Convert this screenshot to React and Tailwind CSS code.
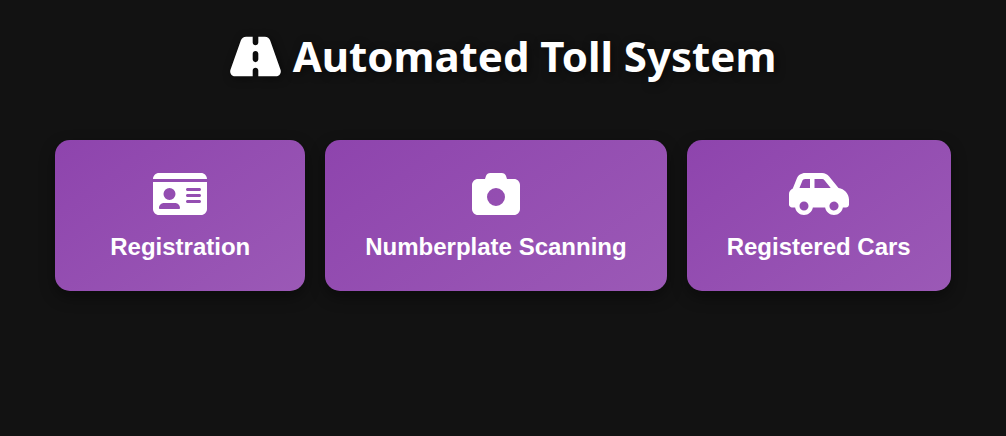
import { FaRoad, FaIdCard, FaCamera, FaCarSide } from "react-icons/fa6";

const actions = [
  { label: "Registration", Icon: FaIdCard, iconWidth: "w-[54px]" },
  { label: "Numberplate Scanning", Icon: FaCamera, iconWidth: "w-12" },
  { label: "Registered Cars", Icon: FaCarSide, iconWidth: "w-[60px]" },
];

export default function App() {
  return (
    <main className="flex min-h-screen flex-col items-center bg-[#121212] px-5 py-6 text-white">
      <h1 className="flex items-center gap-3 font-['Noto_Sans',sans-serif] text-[42px] leading-16 font-bold [text-shadow:2px_2px_8px_rgba(0,0,0,0.5)]">
        <FaRoad
          aria-hidden="true"
          className="h-[45px] w-[51px] [filter:drop-shadow(2px_2px_4px_rgba(0,0,0,0.5))]"
        />
        Automated Toll System
      </h1>
      <div className="mt-13 flex flex-wrap justify-center gap-5">
        {actions.map(({ label, Icon, iconWidth }) => (
          <button
            key={label}
            type="button"
            className="flex min-w-[250px] flex-col items-center rounded-[15px] bg-linear-145 from-[#8e44ad] to-[#9b59b6] px-10 py-[30px] font-['Liberation_Sans',sans-serif] text-2xl leading-7 font-bold shadow-[0_6px_15px_rgba(0,0,0,0.4)]"
          >
            <Icon aria-hidden="true" className={`mb-[15px] h-12 ${iconWidth}`} />
            {label}
          </button>
        ))}
      </div>
    </main>
  );
}
